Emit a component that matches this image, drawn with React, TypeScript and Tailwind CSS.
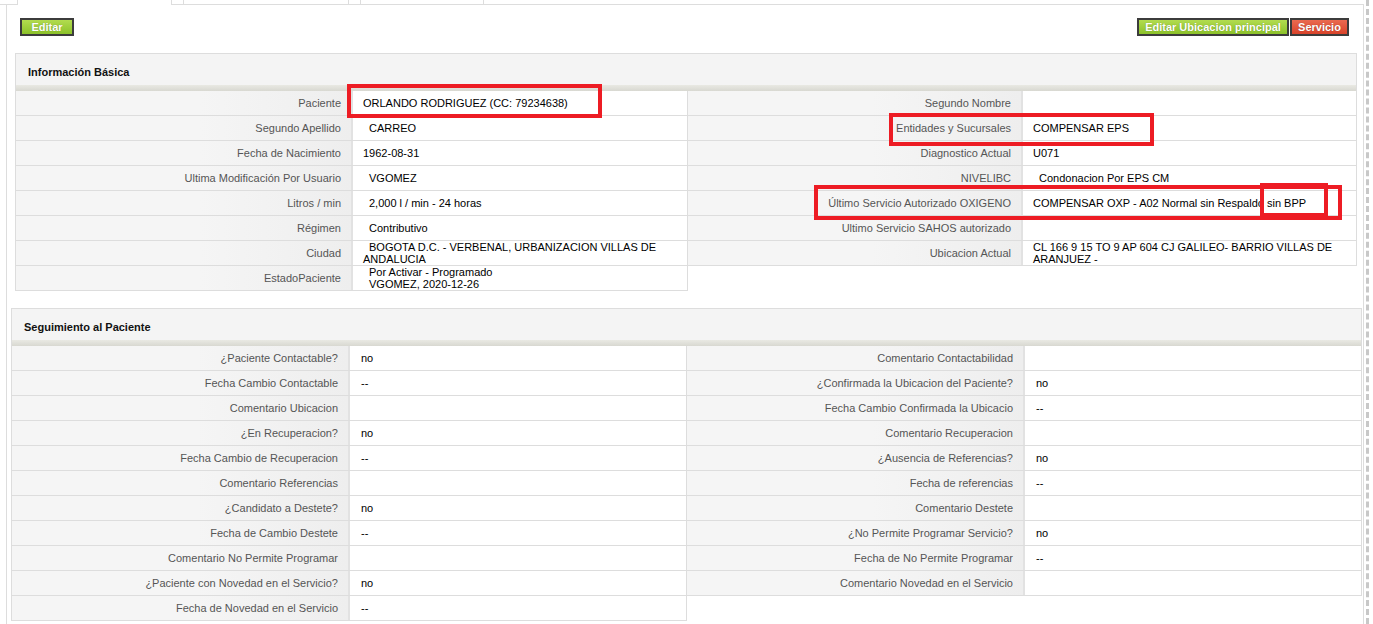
import React from "react";

type Row = { label: string; value?: React.ReactNode; indent?: boolean };

const basicLeft: Row[] = [
  { label: "Paciente", value: "ORLANDO RODRIGUEZ (CC: 79234638)" },
  { label: "Segundo Apellido", value: "CARREO", indent: true },
  { label: "Fecha de Nacimiento", value: "1962-08-31" },
  { label: "Ultima Modificación Por Usuario", value: "VGOMEZ", indent: true },
  { label: "Litros / min", value: "2,000 l / min - 24 horas", indent: true },
  { label: "Régimen", value: "Contributivo", indent: true },
  {
    label: "Ciudad",
    value: (
      <span className="block indent-[6px]">
        BOGOTA D.C. - VERBENAL, URBANIZACION VILLAS DE ANDALUCIA
      </span>
    ),
  },
  {
    label: "EstadoPaciente",
    value: (
      <span className="block pl-[6px]">
        Por Activar - Programado
        <br />
        VGOMEZ, 2020-12-26
      </span>
    ),
  },
];

const basicRight: Row[] = [
  { label: "Segundo Nombre" },
  { label: "Entidades y Sucursales", value: "COMPENSAR EPS" },
  { label: "Diagnostico Actual", value: "U071" },
  { label: "NIVELIBC", value: "Condonacion Por EPS CM", indent: true },
  {
    label: "Último Servicio Autorizado OXIGENO",
    value: "COMPENSAR OXP - A02 Normal sin Respaldo sin BPP",
  },
  { label: "Ultimo Servicio SAHOS autorizado" },
  {
    label: "Ubicacion Actual",
    value: "CL 166 9 15 TO 9 AP 604 CJ GALILEO- BARRIO VILLAS DE ARANJUEZ -",
  },
];

const followLeft: Row[] = [
  { label: "¿Paciente Contactable?", value: "no" },
  { label: "Fecha Cambio Contactable", value: "--" },
  { label: "Comentario Ubicacion" },
  { label: "¿En Recuperacion?", value: "no" },
  { label: "Fecha Cambio de Recuperacion", value: "--" },
  { label: "Comentario Referencias" },
  { label: "¿Candidato a Destete?", value: "no" },
  { label: "Fecha de Cambio Destete", value: "--" },
  { label: "Comentario No Permite Programar" },
  { label: "¿Paciente con Novedad en el Servicio?", value: "no" },
  { label: "Fecha de Novedad en el Servicio", value: "--" },
];

const followRight: Row[] = [
  { label: "Comentario Contactabilidad" },
  { label: "¿Confirmada la Ubicacion del Paciente?", value: "no" },
  { label: "Fecha Cambio Confirmada la Ubicacio", value: "--" },
  { label: "Comentario Recuperacion" },
  { label: "¿Ausencia de Referencias?", value: "no" },
  { label: "Fecha de referencias", value: "--" },
  { label: "Comentario Destete" },
  { label: "¿No Permite Programar Servicio?", value: "no" },
  { label: "Fecha de No Permite Programar", value: "--" },
  { label: "Comentario Novedad en el Servicio" },
];

function InfoTable({
  rows,
  labelW,
  valueW,
  pad,
  left,
}: {
  rows: Row[];
  labelW: string;
  valueW: string;
  pad: string;
  left?: boolean;
}) {
  return (
    <div className={left ? "border-l border-[#dddddd]" : ""}>
      {rows.map((r) => (
        <div key={r.label} className="flex h-[25px] border-b border-[#dddddd]">
          <div
            className={`${labelW} flex items-center justify-end border-r-2 border-[#e2e2e2] bg-[linear-gradient(to_right,#f5f5f5_55%,#eeeeee)] pr-[10px] text-[#555555]`}
          >
            {r.label}
          </div>
          <div
            className={`${valueW} flex items-center border-r border-[#dddddd] bg-white ${pad} leading-[12px] text-black ${
              r.indent ? "pl-[16px]" : ""
            }`}
          >
            {r.value}
          </div>
        </div>
      ))}
    </div>
  );
}

function Header({ title, pl }: { title: string; pl: string }) {
  return (
    <div className="border border-b-0 border-[#dddddd]">
      <div
        className={`flex h-[37px] items-center ${pl} bg-[linear-gradient(to_bottom,#f4f4f4_0,#f4f4f4_31px,#e9e9e3_31px,#d8d8d1_37px)] pb-[1px] text-[11px] font-bold text-[#111]`}
      >
        {title}
      </div>
    </div>
  );
}

function Btn({
  children,
  red,
  w,
}: {
  children: React.ReactNode;
  red?: boolean;
  w: string;
}) {
  return (
    <div
      className={`${w} flex h-[18px] items-center justify-center border-2 border-[#3c3c3c] text-[11px] font-bold leading-none text-white [text-shadow:0_0_1px_rgba(0,0,0,0.35)] ${
        red
          ? "bg-[linear-gradient(to_bottom,#ea6a50,#d9432a)]"
          : "bg-[linear-gradient(to_bottom,#b2dc4f,#8cc22a)]"
      }`}
    >
      {children}
    </div>
  );
}

function RedBox({ cls }: { cls: string }) {
  return <div className={`pointer-events-none absolute border-4 border-[#ed1c24] ${cls}`} />;
}

export default function App() {
  return (
    <div className="relative h-[624px] w-[1369px] overflow-hidden border-r-[3px] border-dashed border-[#c8c8c8] bg-white font-['Liberation_Sans',Arial,sans-serif] text-[11px]">
      {/* tabs (only their bottoms show) */}
      <div className="flex h-[5px] w-[1364px]">
        <div className="w-[17px] border-b border-[#dddddd]" />
        <div className="w-[155px] border-x border-[#dddddd]" />
        <div className="w-[11px] border-b border-[#dddddd]" />
        <div className="w-[166px] border-x border-b border-[#dddddd]" />
        <div className="w-[11px] border-b border-[#dddddd]" />
        <div className="w-[124px] border-x border-b border-[#dddddd]" />
        <div className="flex-1 border-b border-[#dddddd]" />
      </div>

      <div className="ml-[6px] h-[700px] w-[1358px] border-x border-[#dddddd]">
        <div className="flex items-center justify-between pl-[13px] pr-[14px] pt-[13px]">
          <Btn w="w-[54px]">Editar</Btn>
          <div className="flex gap-[1px]">
            <Btn w="w-[152px]">Editar Ubicacion principal</Btn>
            <Btn w="w-[59px]" red>
              Servicio
            </Btn>
          </div>
        </div>

        {/* Información Básica */}
        <div className="ml-[8px] mt-[17px] w-[1342px]">
          <Header title="Información Básica" pl="pl-[12px]" />
          <div className="flex items-start">
            <InfoTable rows={basicLeft} labelW="w-[337px]" valueW="w-[335px]" pad="pl-[10px]" left />
            <InfoTable rows={basicRight} labelW="w-[335px]" valueW="w-[334px]" pad="pl-[10px]" />
          </div>
        </div>

        {/* Seguimiento al Paciente */}
        <div className="ml-[4px] mt-[17px] w-[1351px]">
          <Header title="Seguimiento al Paciente" pl="pl-[12px]" />
          <div className="flex items-start">
            <InfoTable rows={followLeft} labelW="w-[338px]" valueW="w-[337px]" pad="pl-[11px]" left />
            <InfoTable rows={followRight} labelW="w-[338px]" valueW="w-[337px]" pad="pl-[11px]" />
          </div>
        </div>
      </div>

      {/* red annotation boxes */}
      <RedBox cls="left-[347px] top-[84px] h-[34px] w-[255px]" />
      <RedBox cls="left-[889px] top-[113px] h-[33px] w-[265px]" />
      <RedBox cls="left-[814px] top-[185px] h-[35px] w-[528px]" />
      <RedBox cls="left-[1260px] top-[183px] h-[34px] w-[68px]" />
    </div>
  );
}
